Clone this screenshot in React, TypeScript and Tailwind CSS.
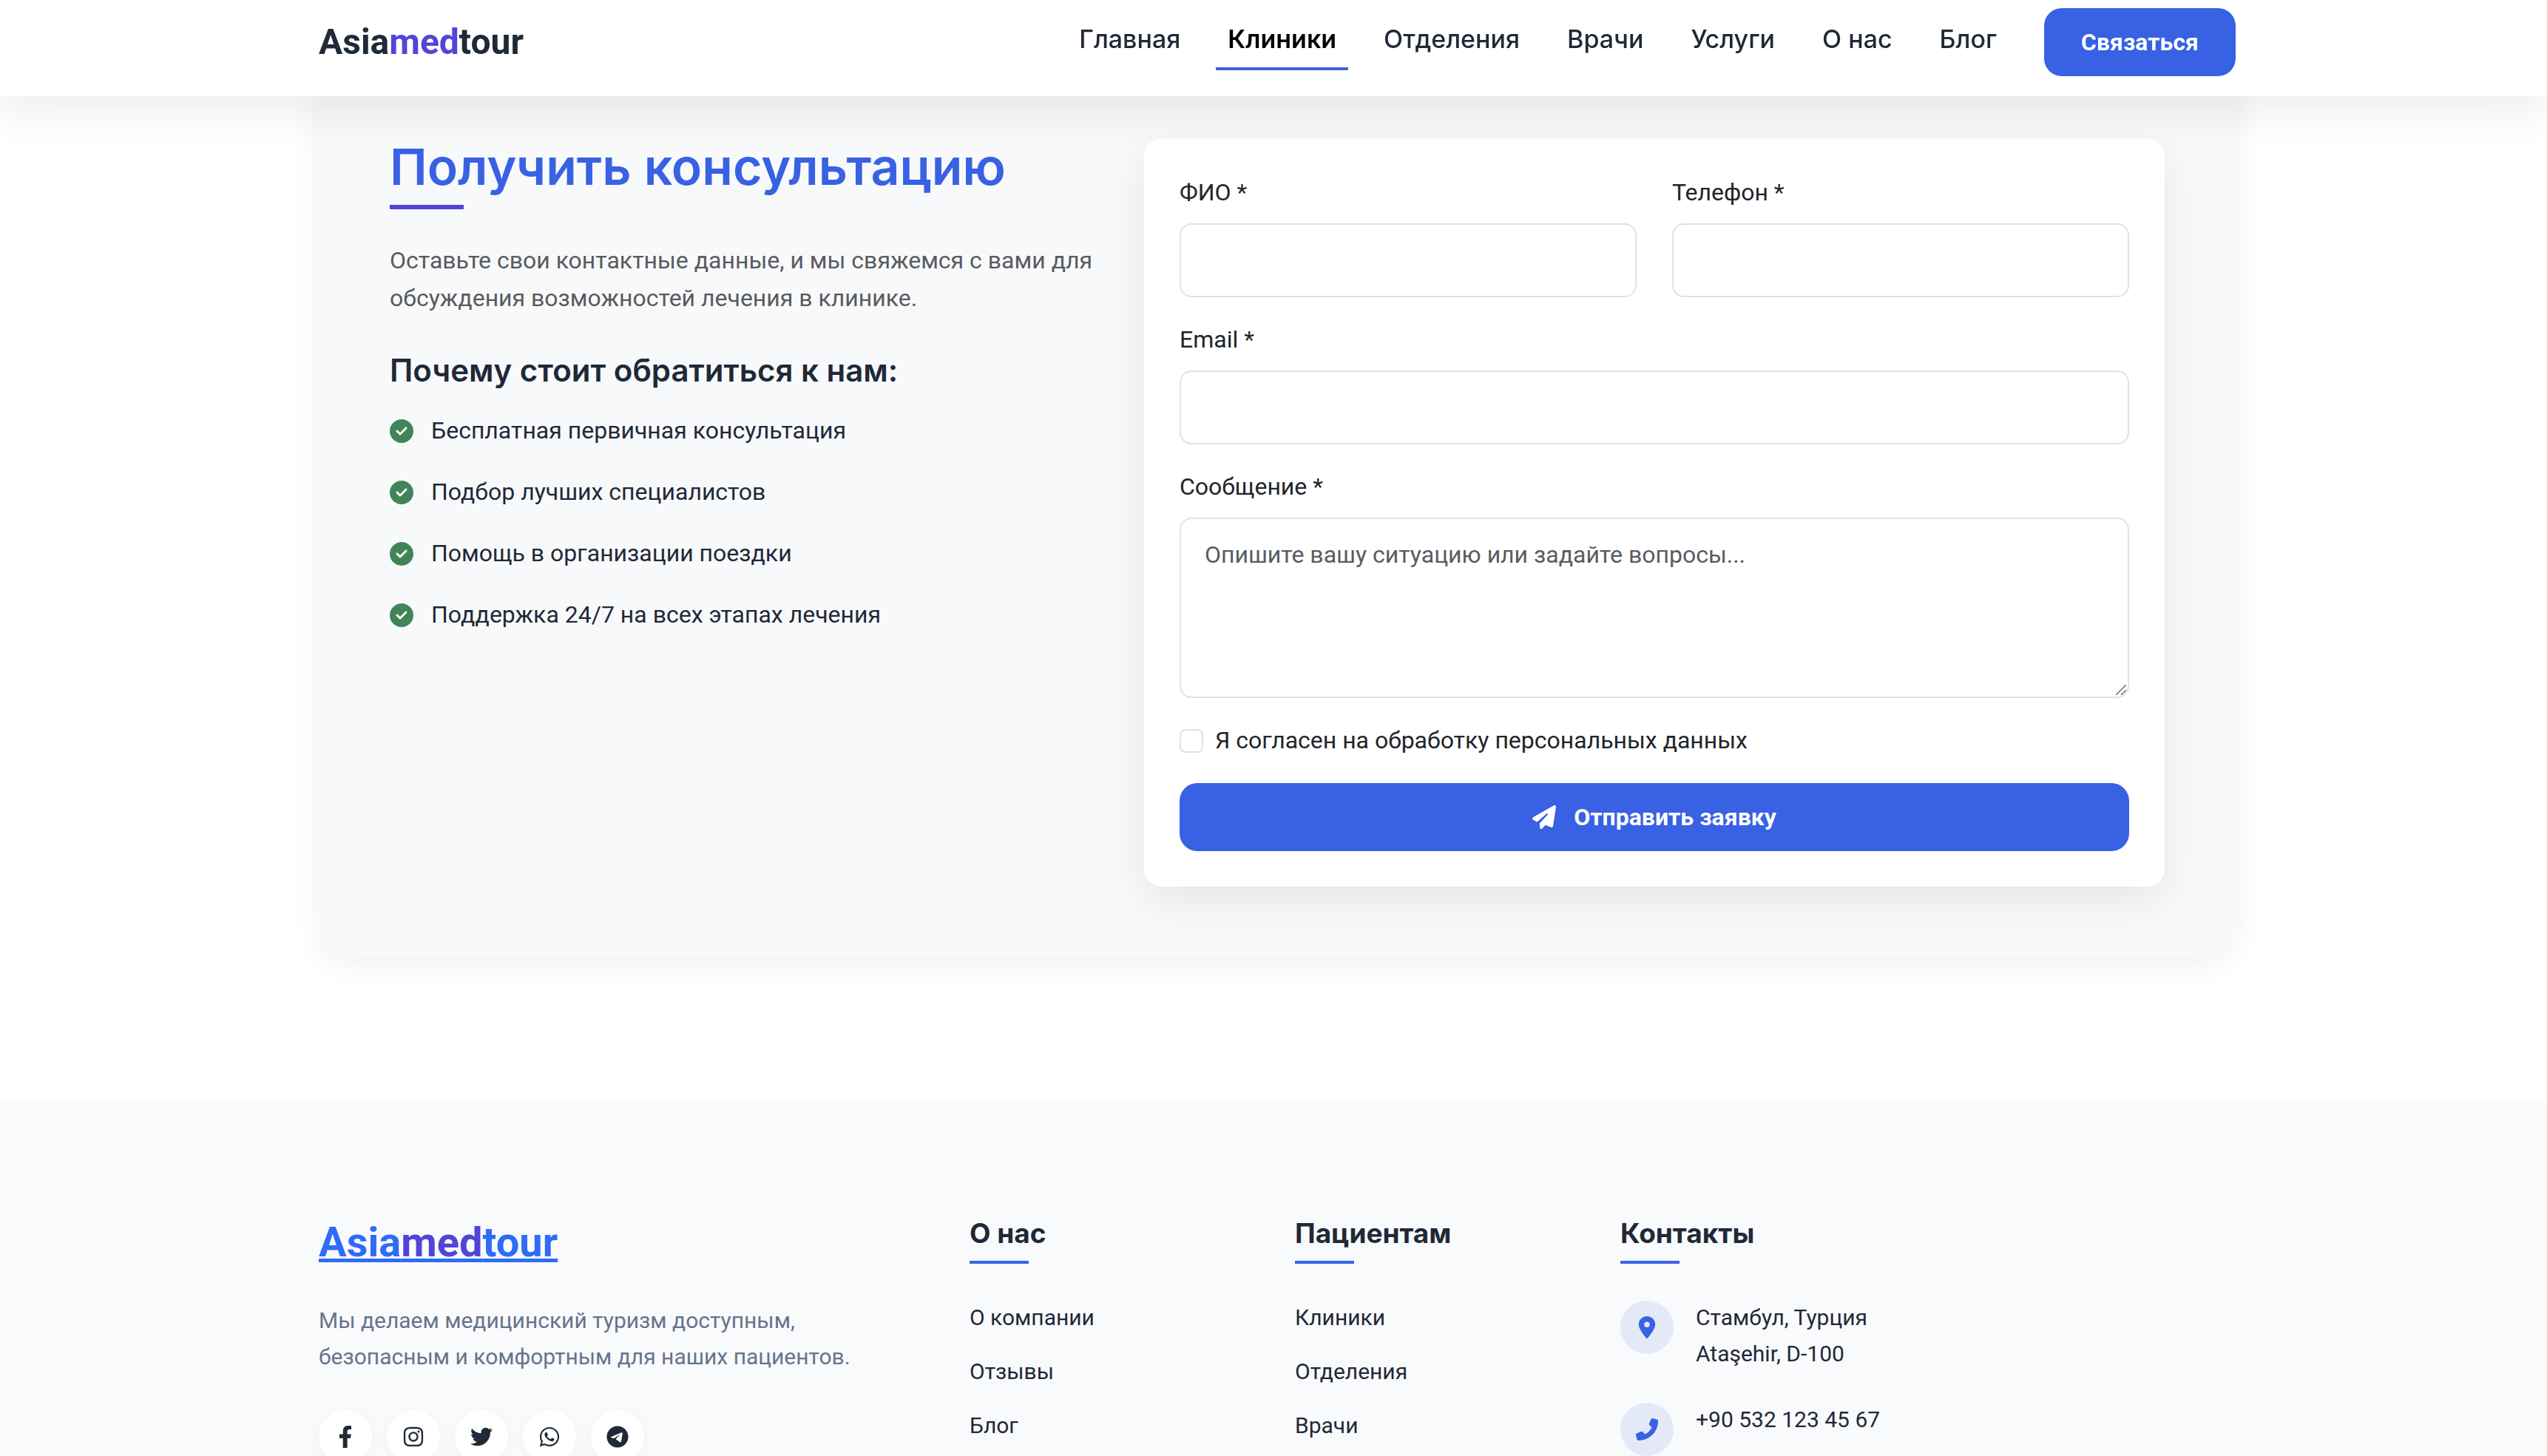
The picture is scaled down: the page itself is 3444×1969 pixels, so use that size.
import { useState, type ReactNode } from "react";
import { clsx } from "clsx";
import type { IconType } from "react-icons";
import { FaFacebookF } from "react-icons/fa";
import {
  FaCircleCheck,
  FaInstagram,
  FaLocationDot,
  FaPaperPlane,
  FaPhoneFlip,
  FaTelegram,
  FaTwitter,
  FaWhatsapp,
} from "react-icons/fa6";

const navLinks = ["Главная", "Клиники", "Отделения", "Врачи", "Услуги", "О нас", "Блог"];

const benefits = [
  "Бесплатная первичная консультация",
  "Подбор лучших специалистов",
  "Помощь в организации поездки",
  "Поддержка 24/7 на всех этапах лечения",
];

const footerColumns = [
  { title: "О нас", links: ["О компании", "Отзывы", "Блог"] },
  { title: "Пациентам", links: ["Клиники", "Отделения", "Врачи"] },
];

const socials: Array<{ label: string; icon: IconType }> = [
  { label: "Facebook", icon: FaFacebookF },
  { label: "Instagram", icon: FaInstagram },
  { label: "Twitter", icon: FaTwitter },
  { label: "WhatsApp", icon: FaWhatsapp },
  { label: "Telegram", icon: FaTelegram },
];

const contacts: Array<{ icon: IconType; lines: string[] }> = [
  { icon: FaLocationDot, lines: ["Стамбул, Турция", "Ataşehir, D-100"] },
  { icon: FaPhoneFlip, lines: ["+90 532 123 45 67"] },
];

const inputClass =
  "block w-full rounded-2xl border-2 border-[#dee2e6] bg-white px-8 py-6 text-[32px] leading-[48px] text-[#212529] outline-none placeholder:text-[#595c5f] focus:border-[#3861e4]";

function Container({ children }: { children: ReactNode }) {
  return <div className="mx-auto w-full max-w-[2602px] pl-2.5">{children}</div>;
}

function Brand() {
  return (
    <>
      Asia<span className="text-[#5145d8]">med</span>tour
    </>
  );
}

function Header() {
  const [active, setActive] = useState("Клиники");

  return (
    <header className="sticky top-0 z-10 bg-white pt-[11px] pb-[27px] shadow-[0_20px_60px_rgba(0,0,0,0.08)]">
      <Container>
        <div className="flex items-center justify-between">
          <a href="#" className="text-[48px] leading-[58px] font-bold text-[#1f2937]">
            <Brand />
          </a>

          <div className="flex items-center gap-12">
            <nav className="flex gap-8 font-[Inter,sans-serif]">
              {navLinks.map((link) => (
                <a
                  key={link}
                  href="#"
                  onClick={() => setActive(link)}
                  className={clsx(
                    "border-b-4 px-4 pt-2.5 pb-3.5 text-[34px] leading-[48px]",
                    link === active
                      ? "border-[#3f62d8] font-semibold text-black"
                      : "border-transparent font-medium text-[#1f2937]"
                  )}
                >
                  {link}
                </a>
              ))}
            </nav>

            <button
              type="button"
              className="rounded-3xl bg-[#3861e4] px-[50px] py-[22px] text-[32px] leading-[48px] font-bold text-white"
            >
              Связаться
            </button>
          </div>
        </div>
      </Container>
    </header>
  );
}

function Field({ id, label, children }: { id: string; label: string; children: ReactNode }) {
  return (
    <div>
      <label htmlFor={id} className="mb-4 block">
        {label}
      </label>
      {children}
    </div>
  );
}

function ResizeGrip() {
  return (
    <svg
      viewBox="0 0 14 14"
      className="pointer-events-none absolute right-1 bottom-1 size-3.5"
      fill="none"
      stroke="#6b6b6b"
      strokeWidth="1.5"
    >
      <path d="M0 14 14 0M7 14l7-7" />
    </svg>
  );
}

function ConsultationForm() {
  return (
    <form
      onSubmit={(event) => event.preventDefault()}
      className="col-span-7 flex flex-col gap-8 rounded-3xl bg-white p-12 text-[32px] leading-[51px] text-[#212529] shadow-[0_20px_60px_rgba(0,0,0,0.08)]"
    >
      <div className="grid grid-cols-2 gap-12">
        <Field id="name" label="ФИО *">
          <input id="name" type="text" required className={inputClass} />
        </Field>
        <Field id="phone" label="Телефон *">
          <input id="phone" type="tel" required className={inputClass} />
        </Field>
      </div>

      <Field id="email" label="Email *">
        <input id="email" type="email" required className={inputClass} />
      </Field>

      <Field id="message" label="Сообщение *">
        <div className="relative">
          <textarea
            id="message"
            rows={4}
            required
            placeholder="Опишите вашу ситуацию или задайте вопросы..."
            className={clsx(inputClass, "resize-y [&::-webkit-resizer]:appearance-none")}
          />
          <ResizeGrip />
        </div>
      </Field>

      <div className="flex items-center gap-4">
        <input
          id="agree"
          type="checkbox"
          className="size-8 appearance-none rounded-lg border-2 border-[#dee2e6] bg-white checked:bg-[#3861e4]"
        />
        <label htmlFor="agree">Я согласен на обработку персональных данных</label>
      </div>

      <button
        type="submit"
        className="flex items-center justify-center gap-6 rounded-3xl bg-[#3861e4] py-[22px] leading-[48px] font-bold text-white"
      >
        <FaPaperPlane size={32} />
        Отправить заявку
      </button>
    </form>
  );
}

function Consultation() {
  return (
    <section className="-mt-[39px] pb-48">
      <Container>
        <div className="grid grid-cols-12 gap-12 rounded-[40px] bg-[#f8f9fb] p-24 shadow-[0_8px_40px_rgba(0,0,0,0.06)]">
          <div className="col-span-5">
            <h2 className="font-[Inter,sans-serif] text-[68px] leading-[76px] font-semibold text-[#3861e4]">
              Получить консультацию
            </h2>
            <div className="mt-3.5 h-1.5 w-[100px] bg-[#5145d8]" />

            <p className="mt-11 text-[32px] leading-[51px] text-[#595b5e]">
              Оставьте свои контактные данные, и мы свяжемся с вами для обсуждения возможностей
              лечения в клинике.
            </p>

            <h3 className="mt-12 font-[Inter,sans-serif] text-[42px] leading-[48px] font-semibold text-[#1f2937]">
              Почему стоит обратиться к нам:
            </h3>

            <ul className="mt-8 flex flex-col gap-8 text-[32px] leading-[51px] text-[#1f2937]">
              {benefits.map((benefit) => (
                <li key={benefit} className="flex items-center gap-6">
                  <FaCircleCheck size={32} className="shrink-0 text-[#408558]" />
                  {benefit}
                </li>
              ))}
            </ul>
          </div>

          <ConsultationForm />
        </div>
      </Container>
    </section>
  );
}

function FooterHeading({ children }: { children: ReactNode }) {
  return (
    <>
      <h3 className="font-[Inter,sans-serif] text-[37px] leading-[42px] font-bold">{children}</h3>
      <div className="mt-4 mb-12 h-1 w-20 bg-[#3861e4]" />
    </>
  );
}

function Footer() {
  return (
    <footer className="bg-[#f9fafc] py-40 text-[30px] leading-[49px] text-[#1f2937]">
      <Container>
        <div className="grid grid-cols-12 gap-12">
          <div className="col-span-4">
            <a
              href="#"
              className="block text-[56px] leading-[66px] font-bold text-[#2f6cf6] underline"
            >
              <Brand />
            </a>
            <p className="mt-12 max-w-[740px] text-[#67748a]">
              Мы делаем медицинский туризм доступным, безопасным и комфортным для наших пациентов.
            </p>
            <div className="mt-12 flex gap-5">
              {socials.map(({ label, icon: Icon }) => (
                <a
                  key={label}
                  href="#"
                  aria-label={label}
                  className="flex size-[72px] items-center justify-center rounded-full bg-white shadow-[0_4px_20px_rgba(0,0,0,0.04)]"
                >
                  <Icon size={30} />
                </a>
              ))}
            </div>
          </div>

          {footerColumns.map((column) => (
            <div key={column.title} className="col-span-2">
              <FooterHeading>{column.title}</FooterHeading>
              <ul className="flex flex-col gap-6">
                {column.links.map((link) => (
                  <li key={link}>
                    <a href="#">{link}</a>
                  </li>
                ))}
              </ul>
            </div>
          ))}

          <div className="col-span-4">
            <FooterHeading>Контакты</FooterHeading>
            <ul className="flex flex-col gap-10">
              {contacts.map(({ icon: Icon, lines }) => (
                <li key={lines[0]} className="flex items-start gap-[30px]">
                  <span className="mt-0.5 flex size-[72px] shrink-0 items-center justify-center rounded-full bg-[#e4e9f8] text-[#3861e4]">
                    <Icon size={30} />
                  </span>
                  <div>
                    {lines.map((line) => (
                      <p key={line}>{line}</p>
                    ))}
                  </div>
                </li>
              ))}
            </ul>
          </div>
        </div>
      </Container>
    </footer>
  );
}

export default function App() {
  return (
    <div className="h-screen overflow-hidden bg-white font-[Roboto,sans-serif]">
      <Header />
      <Consultation />
      <Footer />
    </div>
  );
}
